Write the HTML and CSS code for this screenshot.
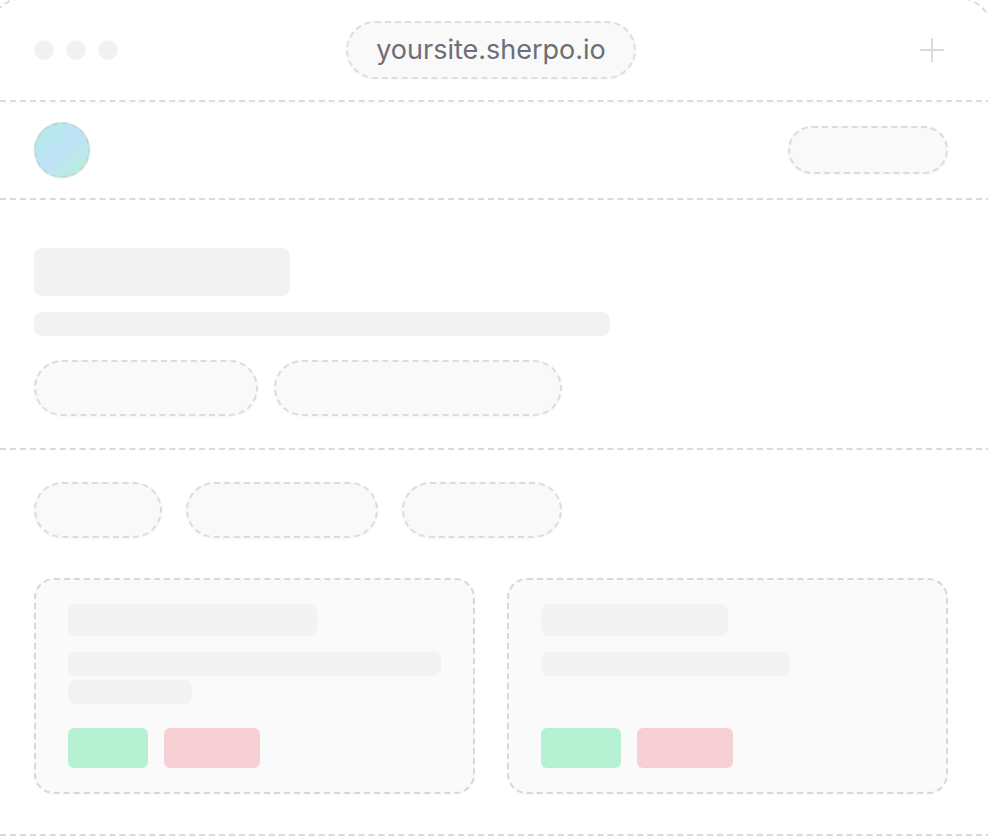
FILE: index.html
```html
<!DOCTYPE html>
<html lang="en">
<head>
<meta charset="utf-8">
<title>Sherpo preview</title>
<link rel="stylesheet" href="styles.css">
</head>
<body>
<div class="window">
  <header class="titlebar">
    <div class="dots"><span class="dot"></span><span class="dot"></span><span class="dot"></span></div>
    <div class="url">yoursite.sherpo.io</div>
    <svg class="plus" width="24" height="24" viewBox="0 0 24 24" aria-hidden="true"><path d="M12 0v24M0 12h24" stroke="#dadada" stroke-width="2" fill="none"/></svg>
  </header>
  <nav class="nav">
    <div class="avatar"></div>
    <div class="pill nav-pill"></div>
  </nav>
  <section class="hero">
    <div class="sk hero-title"></div>
    <div class="sk hero-line"></div>
    <div class="row">
      <div class="pill hero-pill-a"></div>
      <div class="pill hero-pill-b"></div>
    </div>
  </section>
  <section class="content">
    <div class="filters">
      <div class="pill f-a"></div>
      <div class="pill f-b"></div>
      <div class="pill f-c"></div>
    </div>
    <div class="cards">
      <div class="card">
        <div class="sk card-title w249"></div>
        <div class="lines">
          <div class="sk line w373"></div>
          <div class="sk line w124"></div>
        </div>
        <div class="actions"><span class="btn ok"></span><span class="btn no"></span></div>
      </div>
      <div class="card">
        <div class="sk card-title w187"></div>
        <div class="lines">
          <div class="sk line w249"></div>
        </div>
        <div class="actions"><span class="btn ok"></span><span class="btn no"></span></div>
      </div>
    </div>
  </section>
  <div class="more"></div>
</div>
</body>
</html>
```
FILE: styles.css
```css
* { box-sizing: border-box; }
html, body { margin: 0; padding: 0; background: #fff; }
body { overflow: hidden; height: 836px; font-family: Inter, "Noto Sans", sans-serif; }

.window {
  width: 1006px;
  min-height: 900px;
  margin: -3px 0 0 -12px;
  border: 2px dashed #dcdcdc;
  border-radius: 36px;
  background: #fff;
}

.titlebar {
  height: 103px;
  padding: 0 44px;
  display: grid;
  grid-template-columns: 1fr auto 1fr;
  align-items: center;
  border-bottom: 2px dashed #dadada;
  box-shadow: 0 2px 4px rgba(0,0,0,0.025);
  position: relative;
}
.dots { display: flex; gap: 12px; }
.dot { width: 20px; height: 20px; border-radius: 50%; background: #f1f1f1; }
.url {
  height: 58px;
  padding: 0 28px;
  display: flex;
  align-items: center;
  border: 2px dashed #dedede;
  border-radius: 29px;
  background: #f9f9f9;
  color: #6e6e76;
  font-size: 27px;
  box-shadow: 0 1px 3px rgba(0,0,0,0.03);
}
.plus { justify-self: end; margin-right: 4px; }

.nav {
  height: 98px;
  padding: 0 44px;
  display: flex;
  align-items: center;
  justify-content: space-between;
  border-bottom: 2px dashed #dadada;
}
.avatar {
  width: 56px; height: 56px; border-radius: 50%;
  background: linear-gradient(135deg, #aeeee4 0%, #c0e2f8 50%, #b7f0d8 100%);
  border: 2px dashed rgba(200,200,200,0.6);
  box-shadow: 0 1px 3px rgba(0,0,0,0.05);
}

.pill {
  height: 56px;
  border: 2px dashed #dcdcdc;
  border-radius: 28px;
  background: #f9f9f9;
  box-shadow: 0 1px 3px rgba(0,0,0,0.03);
}
.nav-pill { width: 160px; height: 48px; border-radius: 24px; }

.sk { background: #f2f2f2; border-radius: 8px; }

.hero {
  padding: 48px 44px 32px;
  border-bottom: 2px dashed #dadada;
}
.hero-title { width: 256px; height: 48px; }
.hero-line { width: 576px; height: 24px; margin-top: 16px; }
.row { display: flex; gap: 16px; margin-top: 24px; }
.hero-pill-a { width: 224px; }
.hero-pill-b { width: 288px; }

.content {
  padding: 32px 44px 40px;
  border-bottom: 2px dashed #dadada;
}
.filters { display: flex; gap: 24px; }
.f-a { width: 128px; }
.f-b { width: 192px; }
.f-c { width: 160px; }

.cards {
  margin-top: 40px;
  display: grid;
  grid-template-columns: 1fr 1fr;
  gap: 32px;
}
.card {
  height: 216px;
  padding: 24px 32px;
  border: 2px dashed #d8d8d8;
  border-radius: 20px;
  background: #fafafa;
  display: flex;
  flex-direction: column;
  box-shadow: 0 1px 3px rgba(0,0,0,0.02);
}
.card-title { height: 32px; }
.lines { margin-top: 16px; display: flex; flex-direction: column; gap: 4px; }
.line { height: 24px; }
.w124 { width: 124px; }
.w187 { width: 187px; }
.w249 { width: 249px; }
.w373 { width: 373px; }
.actions { margin-top: auto; display: flex; gap: 16px; }
.btn { height: 40px; border-radius: 6px; }
.ok { width: 80px; background: #b6f1d3; }
.no { width: 96px; background: #f7d0d6; }
.more { height: 40px; }
```
